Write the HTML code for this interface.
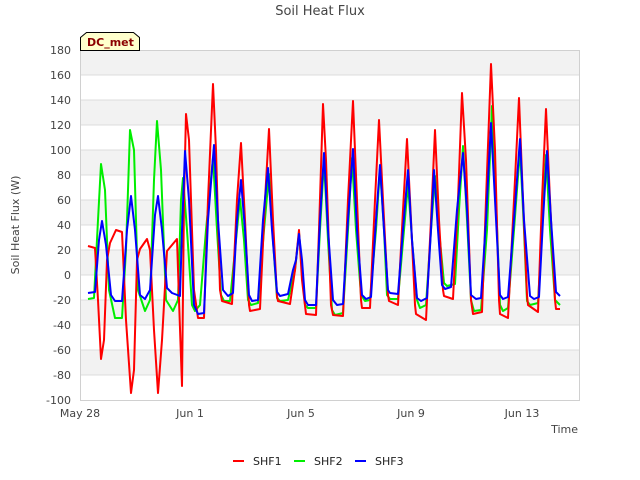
<!DOCTYPE html>
<html><head><meta charset="utf-8"><style>
html,body{margin:0;padding:0;background:#fff;}
svg{display:block;font-family:"DejaVu Sans","Liberation Sans",sans-serif;}
</style></head><body>
<svg width="640" height="480" viewBox="0 0 640 480">
<rect x="0" y="0" width="640" height="480" fill="#fff"/>
<!-- bands -->
<g fill="#f2f2f2">
<rect x="80" y="50" width="500" height="25"/>
<rect x="80" y="100" width="500" height="25"/>
<rect x="80" y="150" width="500" height="25"/>
<rect x="80" y="200" width="500" height="25"/>
<rect x="80" y="250" width="500" height="25"/>
<rect x="80" y="300" width="500" height="25"/>
<rect x="80" y="350" width="500" height="25"/>
</g>
<g stroke="#dcdcdc" stroke-width="1">
<line x1="80" x2="580" y1="75" y2="75"/><line x1="80" x2="580" y1="100" y2="100"/>
<line x1="80" x2="580" y1="125" y2="125"/><line x1="80" x2="580" y1="150" y2="150"/>
<line x1="80" x2="580" y1="175" y2="175"/><line x1="80" x2="580" y1="200" y2="200"/>
<line x1="80" x2="580" y1="225" y2="225"/><line x1="80" x2="580" y1="250" y2="250"/>
<line x1="80" x2="580" y1="275" y2="275"/><line x1="80" x2="580" y1="300" y2="300"/>
<line x1="80" x2="580" y1="325" y2="325"/><line x1="80" x2="580" y1="350" y2="350"/>
<line x1="80" x2="580" y1="375" y2="375"/>
</g>
<rect x="80.5" y="50.5" width="499" height="350" fill="none" stroke="#d0d0d0"/>
<!-- y ticks -->
<g font-size="11" fill="#444" text-anchor="end">
<text x="71" y="54">180</text><text x="71" y="79">160</text><text x="71" y="104">140</text>
<text x="71" y="129">120</text><text x="71" y="154">100</text><text x="71" y="179">80</text>
<text x="71" y="204">60</text><text x="71" y="229">40</text><text x="71" y="254">20</text>
<text x="71" y="279">0</text><text x="71" y="304">-20</text><text x="71" y="329">-40</text>
<text x="71" y="354">-60</text><text x="71" y="379">-80</text><text x="71" y="404">-100</text>
</g>
<g font-size="11" fill="#444" text-anchor="middle">
<text x="80" y="417">May 28</text><text x="190" y="417">Jun 1</text><text x="301" y="417">Jun 5</text>
<text x="411" y="417">Jun 9</text><text x="522" y="417">Jun 13</text>
</g>
<text x="578" y="433" font-size="11" fill="#444" text-anchor="end">Time</text>
<text x="19" y="225" font-size="11" fill="#444" text-anchor="middle" transform="rotate(-90 19 225)">Soil Heat Flux (W)</text>
<text x="320" y="15" font-size="13" fill="#444" text-anchor="middle">Soil Heat Flux</text>
<!-- lines -->
<g fill="none" stroke-width="2" stroke-linejoin="round">
<polyline stroke="#00ee00" points="88,299 94,298 98,220 101,164 105,190 109,290 115,318 122,318 126,250 130,130 134,150 138,290 145,311 150,300 154,180 157,121 161,170 166,300 173,311 178,300 181,200 183,178 187,230 192,305 195,311 200,305 206,230 213,158 217,230 221,295 224,301 230,301 236,240 240,199 244,240 248,300 251,305 258,303 264,230 269,174 273,240 277,298 280,301 288,300 295,270 299,233 302,270 305,305 308,308 316,308 320,230 324,161 328,240 332,310 335,315 343,313 348,230 352,158 356,230 361,295 365,301 370,300 376,230 380,168 384,230 387,295 390,299 398,299 404,230 408,184 412,240 417,300 420,308 426,305 431,230 435,176 439,230 444,283 447,286 455,284 459,210 463,146 467,220 471,300 474,311 481,310 487,230 492,106 496,200 500,305 503,311 508,308 514,230 520,149 524,230 527,301 530,305 538,303 542,230 546,155 550,230 555,300 560,305"/>
<polyline stroke="#ff0000" points="88,246 95,248 98,300 101,359 104,340 107,260 110,243 116,230 122,232 126,320 131,393 134,370 137,260 140,249 147,239 150,250 154,330 158,393 162,340 167,251 177,239 179,300 182,386 184,200 186,114 189,140 194,290 198,318 204,318 208,200 213,84 216,150 220,290 222,301 232,304 237,200 241,143 245,220 249,305 250,311 260,309 265,200 269,129 273,220 277,296 278,301 290,304 295,270 299,230 302,280 306,314 316,315 319,230 323,104 326,160 331,305 333,315 343,316 348,200 353,101 357,200 361,300 362,308 370,308 375,200 379,120 383,200 388,295 389,301 398,305 403,210 407,139 411,220 415,305 416,314 426,320 431,220 435,130 439,220 443,290 444,296 453,299 458,200 462,93 466,160 471,300 473,314 482,312 486,200 491,64 495,150 499,300 500,314 508,318 514,200 519,98 523,200 527,295 528,305 538,312 542,200 546,109 550,200 555,300 556,309 560,309"/>
<polyline stroke="#0000ff" points="88,293 95,292 99,240 102,221 106,245 111,295 115,301 122,301 127,230 131,196 135,230 140,295 145,299 150,290 155,215 158,196 162,230 167,288 172,293 180,296 182,230 185,151 189,200 194,305 198,314 204,313 208,220 214,145 218,220 223,290 228,296 233,293 237,220 241,180 245,230 249,295 252,301 258,300 263,220 268,168 272,230 277,292 280,296 288,294 293,270 296,260 299,234 302,260 305,300 308,305 316,305 320,220 324,153 328,230 333,300 337,305 343,304 348,220 353,149 357,230 362,295 366,299 371,297 376,220 380,165 384,230 388,290 390,293 398,294 403,230 408,170 412,240 417,298 421,301 427,298 431,230 434,170 438,230 442,285 445,289 451,287 457,210 463,153 467,210 471,295 476,299 481,298 486,220 491,123 495,200 500,295 503,299 508,297 514,220 520,139 524,220 530,296 534,299 539,297 543,220 547,151 551,220 556,292 560,296"/>
</g>
<!-- DC_met tag -->
<path d="M80.5,50.5 L80.5,37.5 L86.5,32.5 L133.5,32.5 L139.5,37.5 L139.5,50.5 Z" fill="#ffffcc" stroke="#000" stroke-width="1"/>
<text x="87" y="46" font-size="11" font-weight="bold" fill="#8b0000">DC_met</text>
<!-- legend -->
<g stroke-width="2">
<line x1="233" x2="244" y1="461" y2="461" stroke="#ff0000"/>
<line x1="294" x2="305" y1="461" y2="461" stroke="#00ee00"/>
<line x1="355" x2="366" y1="461" y2="461" stroke="#0000ff"/>
</g>
<g font-size="11" fill="#222">
<text x="253" y="465">SHF1</text><text x="314" y="465">SHF2</text><text x="375" y="465">SHF3</text>
</g>
</svg>
</body></html>
